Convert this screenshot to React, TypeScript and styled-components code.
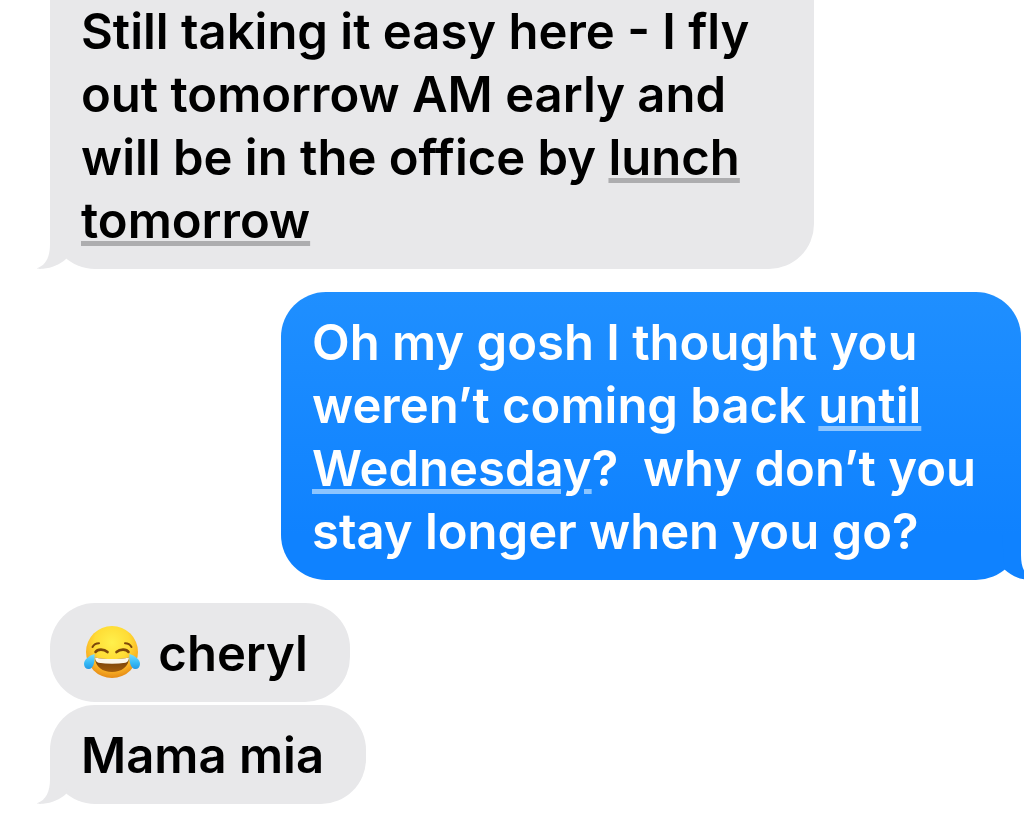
import React from "react";
import styled, { createGlobalStyle, css } from "styled-components";

const GlobalStyle = createGlobalStyle`
  body {
    margin: 0;
    background: #ffffff;
    overflow-x: hidden;
  }
`;

const Thread = styled.main`
  display: flex;
  flex-direction: column;
  gap: 23px;
  padding: 0 3px 9px 50px;
  overflow: hidden;
  font-family: Inter, "Liberation Sans", sans-serif;
  font-size: 49px;
  font-weight: 600;
  line-height: 63px;
`;

const Group = styled.section<{ $sent?: boolean }>`
  display: flex;
  flex-direction: column;
  align-items: ${(p) => (p.$sent ? "flex-end" : "flex-start")};
  gap: 3px;
`;

const received = css`
  max-width: 764px;
  color: #000000;
  background: #e8e8ea;
`;

const sent = css`
  max-width: 740px;
  color: #ffffff;
  background: linear-gradient(#1f8fff, #0f82ff 84%);
`;

const Bubble = styled.p<{ $sent?: boolean; $continued?: boolean }>`
  position: relative;
  box-sizing: border-box;
  margin: 0;
  padding: ${(p) => (p.$continued ? "0" : "19px")} ${(p) => (p.$sent ? "31px" : "42px")} 17px 31px;
  border-radius: ${(p) => (p.$continued ? "0 0 45px 45px" : "45px")};
  ${(p) => (p.$sent ? sent : received)}
`;

const DateLink = styled.a<{ $sent?: boolean }>`
  color: inherit;
  text-decoration: underline;
  text-decoration-color: ${(p) => (p.$sent ? "#8cc5ff" : "#adadaf")};
  text-decoration-thickness: 5px;
  text-underline-offset: 3px;
`;

const TailShape = styled.svg<{ $sent?: boolean }>`
  position: absolute;
  bottom: 0;
  ${(p) => (p.$sent ? "right: -13px; transform: scaleX(-1);" : "left: -13px;")}
`;

const EmojiShape = styled.svg`
  margin: 0 6px 0 3px;
  vertical-align: -8px;
`;

function Tail({ sent: isSent }: { sent?: boolean }) {
  return (
    <TailShape $sent={isSent} width="32" height="45" viewBox="0 0 32 45" aria-hidden="true">
      <path
        d="M13 0V20C13 33 9 41 0 44.3C0 45 3 45 6 44.8C15 44 23 40.5 29.5 34.5L32 0Z"
        fill={isSent ? "#0f82ff" : "#e8e8ea"}
      />
    </TailShape>
  );
}

function JoyEmoji() {
  return (
    <EmojiShape width="56" height="54" viewBox="0 0 56 54" role="img" aria-label="Face with tears of joy">
      <defs>
        <radialGradient id="face" cx="50%" cy="32%" r="68%">
          <stop offset="0" stopColor="#fff04c" />
          <stop offset="0.5" stopColor="#ffdc35" />
          <stop offset="0.8" stopColor="#f9b024" />
          <stop offset="1" stopColor="#e58a16" />
        </radialGradient>
        <linearGradient id="mouth" x1="0" y1="0" x2="0" y2="1">
          <stop offset="0" stopColor="#6d3a08" />
          <stop offset="1" stopColor="#a35c0b" />
        </linearGradient>
        <linearGradient id="tear" x1="0" y1="0" x2="0" y2="1">
          <stop offset="0" stopColor="#79dcff" />
          <stop offset="0.6" stopColor="#35b9f5" />
          <stop offset="1" stopColor="#2599e4" />
        </linearGradient>
      </defs>
      <circle cx="28" cy="27" r="26" fill="url(#face)" />
      <path d="M11 32.5C20 34.5 36 34.5 45 32.5C45 42 37 47 28 47C19 47 11 42 11 32.5Z" fill="url(#mouth)" />
      <path d="M11 32.5C20 34.5 36 34.5 45 32.5C44.8 35 44 37 41.5 37.8C33 39.2 23 39.2 14.5 37.8C12 37 11.2 35 11 32.5Z" fill="#fbf5e9" />
      <g fill="none" stroke="#7c470a" strokeLinecap="round">
        <path d="M11.5 27C13.5 23.8 20 23.8 23.5 27" strokeWidth="2.6" />
        <path d="M32.5 27C36 23.8 42.5 23.8 44.5 27" strokeWidth="2.6" />
        <path d="M8.5 22C9.7 19.8 12 18.2 15 18.2" strokeWidth="2" />
        <path d="M41 18.2C44 18.2 46.3 19.8 47.5 22" strokeWidth="2" />
      </g>
      <path d="M10.5 29C5 30.5 0 34.5 0 39C0 42.5 2.5 44.5 5.3 44C9.7 43.2 11 36.5 10.5 29Z" fill="url(#tear)" />
      <path d="M45.5 29C51 30.5 56 34.5 56 39C56 42.5 53.5 44.5 50.7 44C46.3 43.2 45 36.5 45.5 29Z" fill="url(#tear)" />
    </EmojiShape>
  );
}

export default function App() {
  return (
    <>
      <GlobalStyle />
      <Thread>
        <Group>
          <Bubble $continued>
            Still taking it easy here - I fly out tomorrow AM early and will be in the office by{" "}
            <DateLink href="#lunch-tomorrow">lunch tomorrow</DateLink>
            <Tail />
          </Bubble>
        </Group>
        <Group $sent>
          <Bubble $sent>
            Oh my gosh I thought you weren’t coming back{" "}
            <DateLink $sent href="#until-wednesday">until Wednesday</DateLink>
            {"?\u00a0 why don’t you stay longer when you go?"}
            <Tail sent />
          </Bubble>
        </Group>
        <Group>
          <Bubble>
            <JoyEmoji /> cheryl
          </Bubble>
          <Bubble>
            Mama mia
            <Tail />
          </Bubble>
        </Group>
      </Thread>
    </>
  );
}
